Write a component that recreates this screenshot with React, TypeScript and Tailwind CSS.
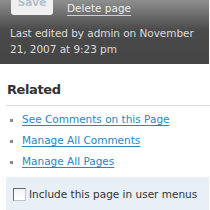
import React from "react";

export default function App() {
  const links = ["See Comments on this Page", "Manage All Comments", "Manage All Pages"];
  return (
    <div className="w-[210px] h-[210px] overflow-hidden bg-white font-['DejaVu_Sans',sans-serif]">
      <div className="h-[64px] w-[209px] overflow-hidden bg-[linear-gradient(#8f8f8f,#4a4a4a_30px,#454545)] pl-[10px]">
        <div className="flex items-start mt-[-15px] h-[30px]">
          <div className="ml-[1px] w-[42px] h-[30px] rounded-[3px] bg-[#efefef] flex justify-center pt-[11px] text-[10.5px] leading-[12px] font-bold text-[#b3bfcc]">
            Save
          </div>
          <a className="ml-[14px] mt-[15px] text-[10.5px] leading-[16px] text-[#ececec] underline underline-offset-[3px] decoration-[#d0d0d0]">
            Delete page
          </a>
        </div>
        <div className="mt-[10px] text-[10.5px] leading-[16px] text-[#dcdcdc] tracking-[-0.05px]">
          <div>Last edited by admin on November</div>
          <div>21, 2007 at 9:23 pm</div>
        </div>
      </div>
      <div className="ml-[6px] mt-[18px]">
        <div className="border-b border-[#dcdcdc] pb-[7px] pl-[1px] text-[13px] leading-[16px] font-bold text-[#333333] tracking-[-0.4px]">
          Related
        </div>
        <ul className="mt-[3px]">
          {links.map((l) => (
            <li key={l} className="flex items-center h-[21px]">
              <span className="ml-[4px] mr-[9px] w-[3px] h-[3px] bg-[#8a8a8a] mt-[1px]" />
              <a className="text-[10.5px] leading-[21px] text-[#2a86c2] underline underline-offset-[2px]">{l}</a>
            </li>
          ))}
        </ul>
        <div className="mt-[5px] w-[203px] h-[40px] bg-[#e8eff7] pl-[7px] pt-[11px]">
          <div className="flex items-center">
            <span className="w-[13px] h-[13px] border border-t-[#6a6a6a] border-l-[#6a6a6a] border-r-[#c4c4c4] border-b-[#c4c4c4] bg-[linear-gradient(#f4f4f4,#ffffff)]" />
            <span className="ml-[3px] text-[10.5px] leading-[13px] text-[#333333]">Include this page in user menus</span>
          </div>
        </div>
      </div>
    </div>
  );
}
